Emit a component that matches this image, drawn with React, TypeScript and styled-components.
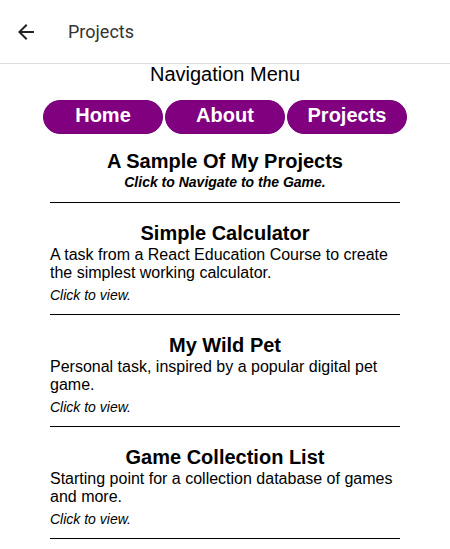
import React from "react";
import styled, { createGlobalStyle } from "styled-components";

const Global = createGlobalStyle`
  html, body { margin: 0; padding: 0; background: #fff; }
  body { font-family: "Liberation Sans", Arial, sans-serif; color: #000; }
`;

const Header = styled.header`
  height: 63px;
  border-bottom: 1px solid #dcdcdc;
  display: flex;
  align-items: center;
  padding-left: 14px;
  gap: 30px;
`;

const BackButton = styled.button`
  width: 24px;
  height: 24px;
  padding: 0;
  border: none;
  background: none;
  display: flex;
  align-items: center;
  justify-content: center;
  color: #222;
`;

const HeaderTitle = styled.div`
  font-family: Roboto, "Liberation Sans", sans-serif;
  font-size: 18px;
  color: #333;
`;

const NavTitle = styled.div`
  text-align: center;
  font-size: 20px;
  line-height: 23px;
  margin-top: -1px;
`;

const NavBar = styled.nav`
  display: flex;
  justify-content: center;
  gap: 2px;
  margin-top: 14px;
`;

const NavButton = styled.button`
  box-sizing: border-box;
  width: 120px;
  height: 34px;
  border: 1px solid #7a007a;
  border-radius: 17px;
  background: #800080;
  color: #fff;
  font-family: "Liberation Sans", Arial, sans-serif;
  font-weight: bold;
  font-size: 20px;
  line-height: 23px;
  padding: 0 0 4px;
  cursor: pointer;
`;

const Content = styled.main`
  width: 350px;
  margin: 0 auto;
`;

const Intro = styled.div`
  text-align: center;
  padding-top: 16px;
  padding-bottom: 12px;
  border-bottom: 1px solid #000;
`;

const IntroTitle = styled.h2`
  margin: 0;
  font-size: 20px;
  line-height: 23px;
  font-weight: bold;
`;

const IntroHint = styled.div`
  margin-top: 1px;
  font-size: 14px;
  line-height: 16px;
  font-weight: bold;
  font-style: italic;
`;

const Item = styled.div`
  padding-top: 19px;
  padding-bottom: 11px;
  border-bottom: 1px solid #000;
  cursor: pointer;
`;

const ItemTitle = styled.h3`
  margin: 0;
  text-align: center;
  font-size: 20px;
  line-height: 23px;
  font-weight: bold;
`;

const ItemDesc = styled.p`
  margin: 1px 0 0;
  font-size: 16px;
  line-height: 18px;
`;

const ItemHint = styled.div`
  margin-top: 5px;
  font-size: 14px;
  line-height: 16px;
  font-style: italic;
`;

const projects = [
  {
    title: "Simple Calculator",
    desc: "A task from a React Education Course to create the simplest working calculator.",
  },
  {
    title: "My Wild Pet",
    desc: "Personal task, inspired by a popular digital pet game.",
  },
  {
    title: "Game Collection List",
    desc: "Starting point for a collection database of games and more.",
  },
];

export default function App() {
  return (
    <>
      <Global />
      <Header>
        <BackButton aria-label="Back">
          <svg width="24" height="24" viewBox="0 0 24 24" fill="currentColor">
            <path d="M20 11H7.83l5.59-5.59L12 4l-8 8 8 8 1.41-1.41L7.83 13H20v-2z" />
          </svg>
        </BackButton>
        <HeaderTitle>Projects</HeaderTitle>
      </Header>
      <NavTitle>Navigation Menu</NavTitle>
      <NavBar>
        <NavButton>Home</NavButton>
        <NavButton>About</NavButton>
        <NavButton>Projects</NavButton>
      </NavBar>
      <Content>
        <Intro>
          <IntroTitle>A Sample Of My Projects</IntroTitle>
          <IntroHint>Click to Navigate to the Game.</IntroHint>
        </Intro>
        {projects.map((p) => (
          <Item key={p.title}>
            <ItemTitle>{p.title}</ItemTitle>
            <ItemDesc>{p.desc}</ItemDesc>
            <ItemHint>Click to view.</ItemHint>
          </Item>
        ))}
      </Content>
    </>
  );
}
